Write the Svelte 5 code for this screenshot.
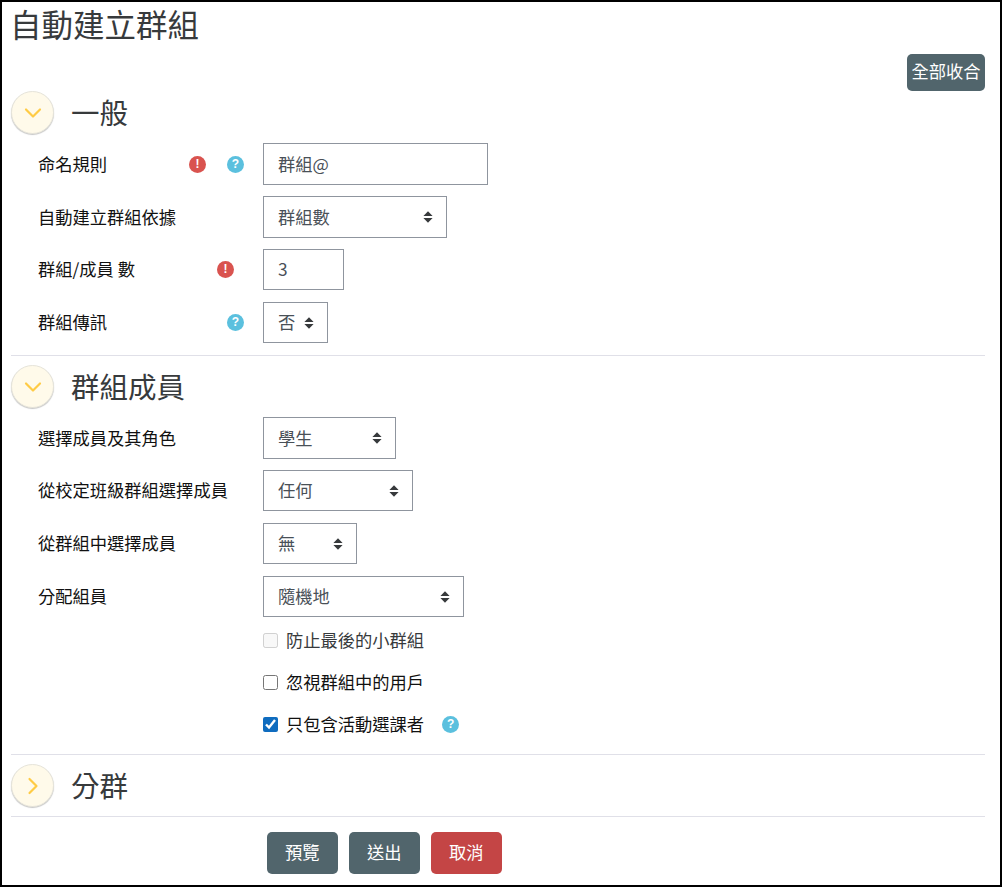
<script>
  const general = [
    { label: "命名規則", type: "text", value: "群組@", width: 225, error: true, help: true },
    { label: "自動建立群組依據", type: "select", value: "群組數", width: 184 },
    { label: "群組/成員 數", type: "text", value: "3", width: 81, error: true, small: true },
    { label: "群組傳訊", type: "select", value: "否", width: 65, help: true, small: true },
  ];
  const members = [
    { label: "選擇成員及其角色", type: "select", value: "學生", width: 133 },
    { label: "從校定班級群組選擇成員", type: "select", value: "任何", width: 150, small: true },
    { label: "從群組中選擇成員", type: "select", value: "無", width: 94, small: true },
    { label: "分配組員", type: "select", value: "隨機地", width: 201, small: true },
  ];
</script>

{#snippet chevron(open)}
  <span class="toggle">
    <svg width="18" height="18" viewBox="0 0 18 18" class:closed={!open}>
      <path d="M2 5.5 9 12.5 16 5.5" fill="none" stroke="#ffcb45" stroke-width="2.2" stroke-linecap="round" stroke-linejoin="round" />
    </svg>
  </span>
{/snippet}

{#snippet row(item)}
  <div class="row" class:small={item.small}>
    <div class="label">
      <span class="label-text">{item.label}</span>
      {#if item.error}<span class="badge error">!</span>{/if}
      {#if item.help}<span class="badge help">?</span>{/if}
    </div>
    {#if item.type === "select"}
      <div class="select-wrap" style="width: {item.width}px">
        <select>
          <option>{item.value}</option>
        </select>
        <svg class="arrows" width="10" height="12" viewBox="0 0 10 12">
          <path d="M5 0.3 9.6 5H0.4Z M5 11.7 0.4 7H9.6Z" fill="#373a3c" />
        </svg>
      </div>
    {:else}
      <input type="text" value={item.value} style="width: {item.width}px" />
    {/if}
  </div>
{/snippet}

<div class="page">
  <h1>自動建立群組</h1>
  <div class="collapse-bar">
    <button class="btn">全部收合</button>
  </div>

  <section>
    <div class="section-head">
      {@render chevron(true)}
      <h2>一般</h2>
    </div>
    {#each general as item}
      {@render row(item)}
    {/each}
  </section>

  <section class="bordered">
    <div class="section-head">
      {@render chevron(true)}
      <h2>群組成員</h2>
    </div>
    {#each members as item}
      {@render row(item)}
    {/each}
    <div class="checks">
      <label class="check muted">
        <input type="checkbox" disabled />
        <span class="check-text">防止最後的小群組</span>
      </label>
      <label class="check">
        <input type="checkbox" />
        <span class="check-text">忽視群組中的用戶</span>
      </label>
      <label class="check">
        <input type="checkbox" checked />
        <span class="check-text">只包含活動選課者</span>
        <span class="badge help inline">?</span>
      </label>
    </div>
  </section>

  <section class="bordered collapsed">
    <div class="section-head">
      {@render chevron(false)}
      <h2>分群</h2>
    </div>
  </section>

  <div class="actions">
    <button class="btn">預覽</button>
    <button class="btn">送出</button>
    <button class="btn danger">取消</button>
  </div>
</div>

<style>
  :global(body) {
    margin: 0;
    background: #fff;
  }

  .page {
    box-sizing: border-box;
    width: 1002px;
    height: 887px;
    border: 2px solid #000;
    padding: 0 15px 0 9px;
    overflow: hidden;
    color: #373a3c;
    font-family: "Noto Sans CJK TC", "Noto Sans", sans-serif;
    font-size: 17.28px;
  }

  h1 {
    margin: 0 0 0 -1px;
    height: 49px;
    font-size: 31.5px;
    line-height: 42px;
    font-weight: 400;
  }

  .collapse-bar {
    display: flex;
    justify-content: flex-end;
    height: 37px;
    margin-top: 3px;
  }

  .btn {
    border: 0;
    border-radius: 5px;
    background: #51656c;
    color: #fff;
    font: inherit;
    line-height: 1;
    height: 42px;
    padding: 0 0 3px;
    white-space: nowrap;
    cursor: pointer;
  }

  .collapse-bar .btn {
    height: 37px;
    width: 78px;
  }

  .btn.danger {
    background: #c44545;
  }

  section.bordered {
    border-top: 1px solid #e0e0e8;
    padding-top: 9px;
    margin-top: 12px;
  }

  section.collapsed {
    margin-top: 9px;
    padding-bottom: 9px;
    border-bottom: 1px solid #e0e0e8;
  }

  .section-head {
    display: flex;
    align-items: center;
    gap: 17px;
    height: 43px;
    margin-bottom: 9px;
  }

  .collapsed .section-head {
    margin-bottom: 0;
  }

  .toggle {
    box-sizing: border-box;
    width: 43px;
    height: 43px;
    border-radius: 50%;
    background: #fffaea;
    border: 1px solid #e6e4da;
    box-shadow: 0 1px 1px #c8c8c8;
    display: flex;
    align-items: center;
    justify-content: center;
  }

  .toggle svg.closed {
    transform: rotate(-90deg);
  }

  h2 {
    margin: 0;
    font-size: 28.5px;
    line-height: 40px;
    padding-bottom: 2px;
    font-weight: 400;
  }

  .row {
    display: flex;
    align-items: center;
    height: 42px;
    margin-bottom: 11px;
  }

  .row.small {
    height: 41px;
    margin-bottom: 12px;
  }

  .row:last-of-type {
    margin-bottom: 0;
  }

  .label {
    box-sizing: border-box;
    width: 252px;
    padding: 0 19px 0 27px;
    display: flex;
    align-items: center;
    color: #111;
  }

  .label-text {
    margin-right: auto;
    padding-bottom: 2px;
  }

  .badge {
    flex: none;
    width: 17px;
    height: 17px;
    border-radius: 50%;
    color: #fff;
    font-family: "Liberation Sans", sans-serif;
    font-size: 12px;
    font-weight: 700;
    line-height: 17px;
    text-align: center;
  }

  .badge.error {
    background: #d9534f;
    margin-right: 10px;
  }

  .badge.help {
    background: #5bc0de;
    margin-left: 11px;
  }

  input[type="text"],
  select {
    box-sizing: border-box;
    height: 100%;
    border: 1px solid #8f959e;
    border-radius: 0;
    background: #fff;
    color: #495057;
    font: inherit;
    padding: 0 14px 2px;
    outline: none;
  }

  select {
    width: 100%;
    appearance: none;
  }

  .select-wrap {
    position: relative;
    height: 100%;
  }

  .arrows {
    position: absolute;
    right: 14px;
    top: 50%;
    margin-top: -6px;
    pointer-events: none;
  }

  .checks {
    padding-left: 252px;
    margin-top: -10px;
  }

  .check {
    display: flex;
    align-items: center;
    height: 42px;
    color: #111;
  }

  .check input {
    width: 15px;
    height: 15px;
    margin: 0 8px 0 0;
    accent-color: #0f6cbf;
  }

  .check-text {
    padding-bottom: 2px;
  }

  .check.muted .check-text {
    color: #373a3c;
  }

  .badge.inline {
    margin-left: 18px;
  }

  .actions {
    display: flex;
    gap: 11.4px;
    padding-left: 256px;
    margin-top: 15px;
  }

  .actions .btn {
    width: 70.6px;
  }
</style>
